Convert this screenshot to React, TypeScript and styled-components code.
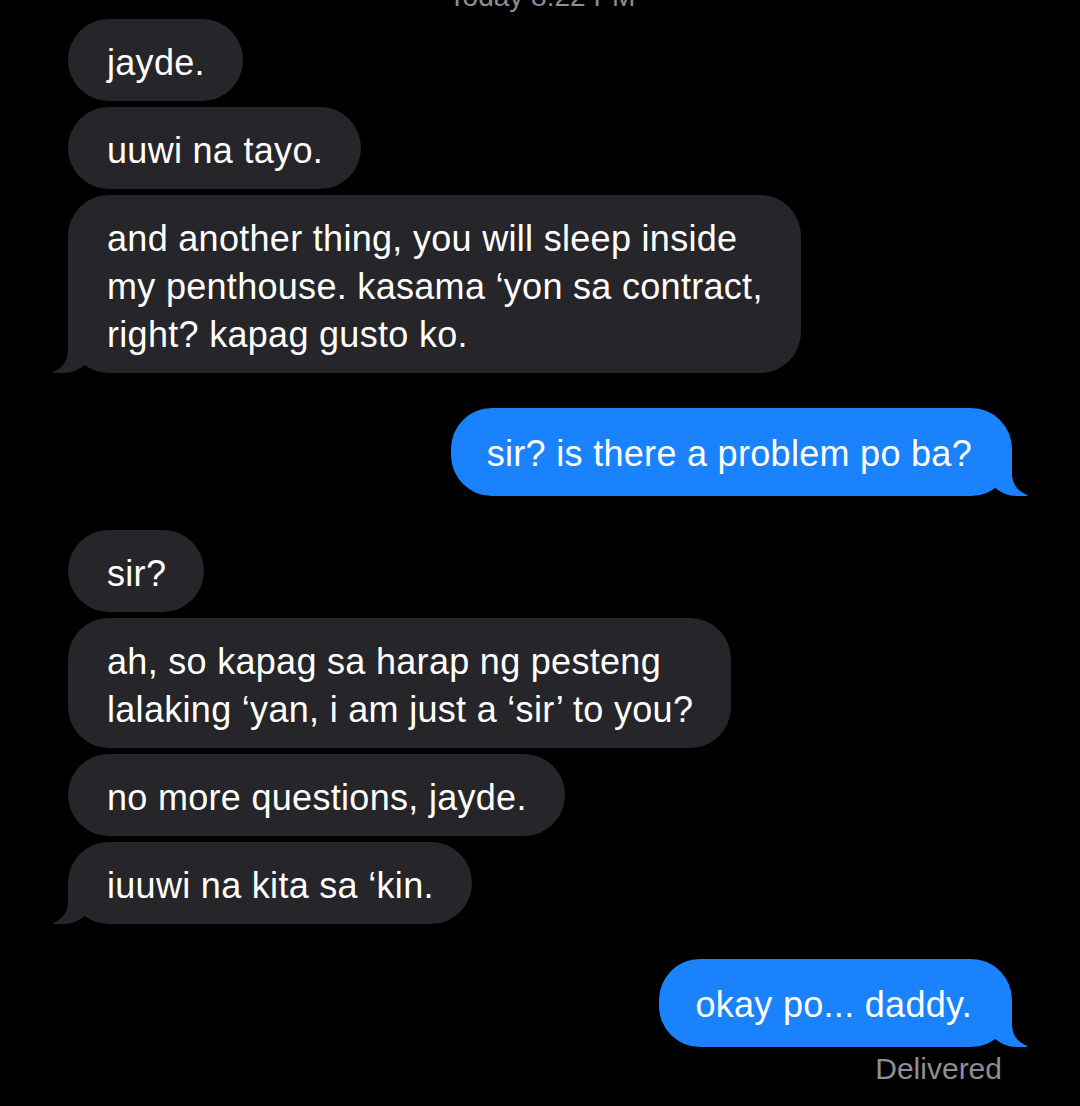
import React from "react";
import styled, { createGlobalStyle, css } from "styled-components";

const GlobalStyle = createGlobalStyle`
  html, body {
    margin: 0;
    padding: 0;
    background: #000;
    overflow: hidden;
  }
  body {
    font-family: "Liberation Sans", Arial, sans-serif;
    -webkit-font-smoothing: antialiased;
  }
`;

const Screen = styled.div`
  width: 1080px;
  height: 1106px;
  background: #000;
  padding: 0 68px;
  box-sizing: border-box;
  display: flex;
  flex-direction: column;
`;

const Timestamp = styled.div`
  margin-top: -20px;
  text-align: center;
  font-size: 28px;
  line-height: 34px;
  color: #8e8e93;
  padding-left: 4px;
`;

const Group = styled.div<{ $side: "them" | "me"; $gapTop: number }>`
  display: flex;
  flex-direction: column;
  gap: 6px;
  margin-top: ${(p) => p.$gapTop}px;
  align-items: ${(p) => (p.$side === "me" ? "flex-end" : "flex-start")};
`;

const tailThem = css`
  &::before {
    content: "";
    position: absolute;
    bottom: 0;
    left: -15px;
    width: 44px;
    height: 44px;
    background: #262529;
    border-bottom-right-radius: 34px;
  }
  &::after {
    content: "";
    position: absolute;
    bottom: 0;
    left: -57px;
    width: 57px;
    height: 44px;
    background: #000;
    border-bottom-right-radius: 22px;
  }
`;

const tailMe = css`
  &::before {
    content: "";
    position: absolute;
    bottom: 0;
    right: -15px;
    width: 44px;
    height: 44px;
    background: #1982fc;
    border-bottom-left-radius: 34px;
  }
  &::after {
    content: "";
    position: absolute;
    bottom: 0;
    right: -57px;
    width: 57px;
    height: 44px;
    background: #000;
    border-bottom-left-radius: 22px;
  }
`;

const Bubble = styled.div<{ $side: "them" | "me"; $tail?: boolean }>`
  position: relative;
  box-sizing: border-box;
  font-size: 36px;
  line-height: 48px;
  letter-spacing: 0.3px;
  color: #fff;
  white-space: pre-line;
  border-radius: 41px;
  padding: ${(p) => (p.$side === "me" ? "22px 40px 18px 36px" : "20px 38px 14px 39px")};
  background: ${(p) => (p.$side === "me" ? "#1982fc" : "#262529")};
  ${(p) => (p.$tail ? (p.$side === "me" ? tailMe : tailThem) : "")}
`;

const Status = styled.div`
  align-self: flex-end;
  margin-top: 5px;
  margin-right: 10px;
  font-size: 30px;
  line-height: 34px;
  color: #8e8e93;
`;

type Msg = { text: string };
type Block = { side: "them" | "me"; gapTop: number; messages: Msg[] };

const conversation: Block[] = [
  {
    side: "them",
    gapTop: 5,
    messages: [
      { text: "jayde." },
      { text: "uuwi na tayo." },
      {
        text:
          "and another thing, you will sleep inside\nmy penthouse. kasama \u2018yon sa contract,\nright? kapag gusto ko.",
      },
    ],
  },
  {
    side: "me",
    gapTop: 35,
    messages: [{ text: "sir? is there a problem po ba?" }],
  },
  {
    side: "them",
    gapTop: 34,
    messages: [
      { text: "sir?" },
      {
        text:
          "ah, so kapag sa harap ng pesteng\nlalaking \u2018yan, i am just a \u2018sir\u2019 to you?",
      },
      { text: "no more questions, jayde." },
      { text: "iuuwi na kita sa \u2018kin." },
    ],
  },
  {
    side: "me",
    gapTop: 35,
    messages: [{ text: "okay po... daddy." }],
  },
];

export default function App() {
  return (
    <>
      <GlobalStyle />
      <Screen>
        <Timestamp>Today 8:22 PM</Timestamp>
        {conversation.map((block, i) => (
          <Group key={i} $side={block.side} $gapTop={block.gapTop}>
            {block.messages.map((m, j) => (
              <Bubble
                key={j}
                $side={block.side}
                $tail={j === block.messages.length - 1}
              >
                {m.text}
              </Bubble>
            ))}
          </Group>
        ))}
        <Status>Delivered</Status>
      </Screen>
    </>
  );
}
